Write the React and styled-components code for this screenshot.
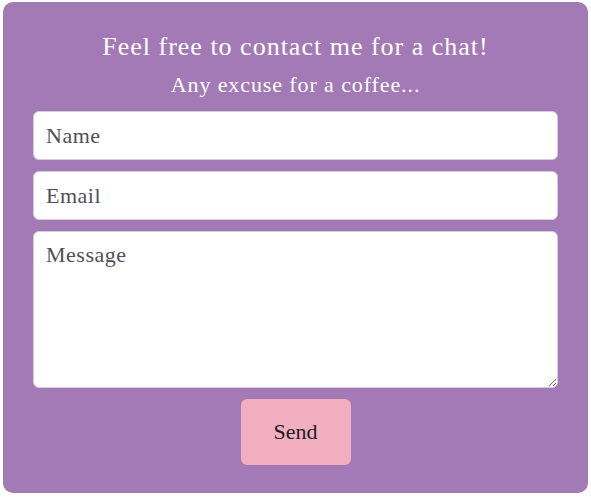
import React from 'react';
import styled, { createGlobalStyle } from 'styled-components';

const GlobalStyle = createGlobalStyle`
    html, body {
        margin: 0;
        padding: 0;
        background: #ffffff;
    }
    * {
        box-sizing: border-box;
    }
`;

const Card = styled.section`
    background: #a37ab5;
    border-radius: 10px;
    color: #ffffff;
    font-family: "Liberation Serif", "DejaVu Serif", serif;
    height: 491px;
    margin: 2px 3px 0 3px;
    padding: 30px 30px 0 30px;
`;

const Title = styled.h2`
    font-size: 26px;
    font-weight: normal;
    letter-spacing: 1px;
    line-height: 30px;
    margin: 0;
    text-align: center;
`;

const Subtitle = styled.h3`
    font-size: 22px;
    font-weight: normal;
    letter-spacing: 0.9px;
    line-height: 28px;
    margin: 9px 0 12px;
    text-align: center;
`;

const Form = styled.form`
    align-items: center;
    display: flex;
    flex-direction: column;
    gap: 11px;
`;

const fieldStyles = `
    background: #ffffff;
    border: 1px solid #cfcfd6;
    border-radius: 6px;
    color: #4a4a55;
    font-family: "Liberation Serif", "DejaVu Serif", serif;
    font-size: 22px;
    letter-spacing: 0.5px;
    outline: none;
    padding: 10px 12px;
    width: 525px;

    &::placeholder {
        color: #4f5057;
        opacity: 1;
    }
`;

const Input = styled.input`
    ${fieldStyles}
    height: 49px;
`;

const TextArea = styled.textarea`
    ${fieldStyles}
    height: 157px;
    resize: vertical;
`;

const SendButton = styled.button`
    background: #f2afc0;
    border: none;
    border-radius: 6px;
    color: #1c1c22;
    font-family: "Liberation Serif", "DejaVu Serif", serif;
    font-size: 22px;
    height: 66px;
    width: 110px;
`;

export default function App() {
    return (
        <>
            <GlobalStyle />
            <Card>
                <Title>Feel free to contact me for a chat!</Title>
                <Subtitle>Any excuse for a coffee...</Subtitle>
                <Form>
                    <Input type="text" name="name" placeholder="Name" />
                    <Input type="email" name="email" placeholder="Email" />
                    <TextArea name="message" placeholder="Message" />
                    <SendButton type="button">Send</SendButton>
                </Form>
            </Card>
        </>
    );
}
